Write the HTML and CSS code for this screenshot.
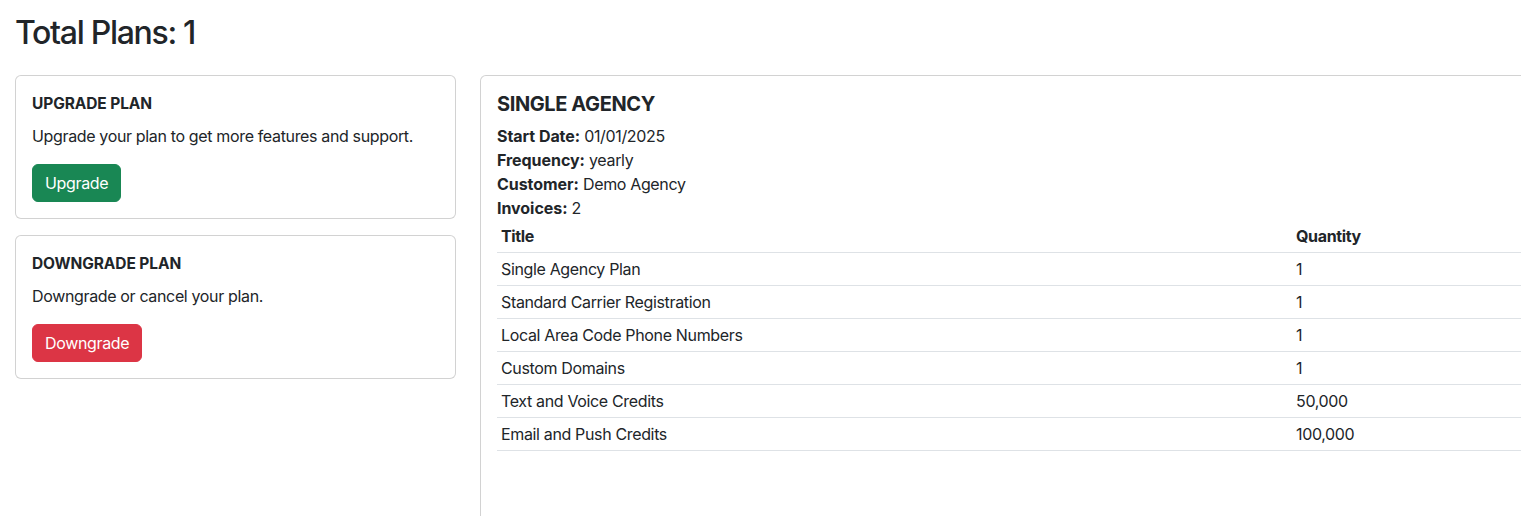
FILE: index.html
```html
<!DOCTYPE html>
<html lang="en">
<head>
<meta charset="utf-8">
<title>Plans</title>
<link rel="stylesheet" href="styles.css">
</head>
<body>
<div class="page">
  <h2 class="page-title">Total Plans: 1</h2>
  <div class="layout">
    <aside class="side">
      <div class="card">
        <div class="card-body">
          <h6 class="card-title">UPGRADE PLAN</h6>
          <p class="card-text">Upgrade your plan to get more features and support.</p>
          <button class="btn btn-success">Upgrade</button>
        </div>
      </div>
      <div class="card">
        <div class="card-body">
          <h6 class="card-title">DOWNGRADE PLAN</h6>
          <p class="card-text">Downgrade or cancel your plan.</p>
          <button class="btn btn-danger">Downgrade</button>
        </div>
      </div>
    </aside>
    <section class="card plan-card">
      <div class="card-body">
        <h5 class="plan-name">SINGLE AGENCY</h5>
        <div class="meta"><strong>Start Date:</strong> 01/01/2025</div>
        <div class="meta"><strong>Frequency:</strong> yearly</div>
        <div class="meta"><strong>Customer:</strong> Demo Agency</div>
        <div class="meta"><strong>Invoices:</strong> 2</div>
        <table class="items">
          <thead>
            <tr><th class="col-title">Title</th><th>Quantity</th></tr>
          </thead>
          <tbody>
            <tr><td>Single Agency Plan</td><td>1</td></tr>
            <tr><td>Standard Carrier Registration</td><td>1</td></tr>
            <tr><td>Local Area Code Phone Numbers</td><td>1</td></tr>
            <tr><td>Custom Domains</td><td>1</td></tr>
            <tr><td>Text and Voice Credits</td><td>50,000</td></tr>
            <tr><td>Email and Push Credits</td><td>100,000</td></tr>
          </tbody>
        </table>
      </div>
    </section>
  </div>
</div>
</body>
</html>
```

FILE: styles.css
```css
html, body {
  margin: 0;
  overflow: hidden;
  background: #fff;
}
body {
  font-family: "Inter", "Noto Sans", sans-serif;
  font-size: 16px;
  line-height: 1.5;
  letter-spacing: -0.35px;
  color: #212529;
}
.page {
  padding: 14px 0 0 15px;
}
.page-title {
  margin: 0 0 8px;
  font-size: 32px;
  font-weight: 500;
  line-height: 1.2;
  letter-spacing: -1.3px;
}
.layout {
  display: flex;
  align-items: flex-start;
  gap: 24px;
  margin-top: 23px;
  width: 1900px;
}
.side {
  flex: 0 0 441px;
  display: flex;
  flex-direction: column;
  gap: 16px;
}
.card {
  border: 1px solid rgba(0, 0, 0, 0.175);
  border-radius: 6px;
  background: #fff;
}
.card-body {
  padding: 16px;
}
.card-title {
  margin: 0 0 8px;
  font-size: 15.5px;
  font-weight: 700;
  line-height: 24px;
  letter-spacing: -0.1px;
}
.card-text {
  margin: 0 0 16px;
}
.btn {
  display: inline-block;
  font: inherit;
  line-height: 1.5;
  letter-spacing: inherit;
  padding: 6px 12px;
  border: 1px solid transparent;
  border-radius: 6px;
  color: #fff;
  cursor: pointer;
}
.btn-success {
  background: #198754;
  border-color: #198754;
}
.btn-danger {
  background: #dc3545;
  border-color: #dc3545;
}
.plan-card {
  flex: 0 0 1620px;
  min-height: 460px;
}
.plan-name {
  margin: 0 0 8px;
  font-size: 20px;
  font-weight: 700;
  line-height: 1.2;
  letter-spacing: -0.4px;
}
.meta strong {
  font-weight: 700;
  letter-spacing: -0.05px;
}
.items {
  width: 1590px;
  border-collapse: collapse;
}
.items th,
.items td {
  padding: 4px;
  text-align: left;
  border-bottom: 1px solid #dee2e6;
}
.items th {
  font-weight: 700;
}
.col-title {
  width: 787px;
}
```
